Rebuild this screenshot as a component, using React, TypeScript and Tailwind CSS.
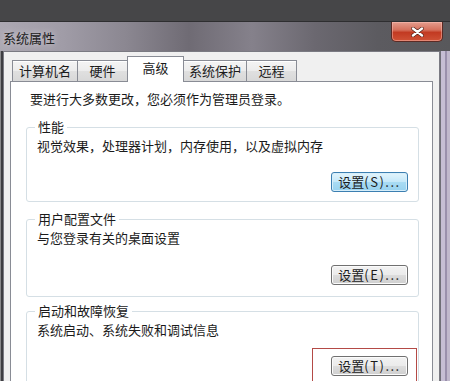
const tabs = [
  { label: "计算机名", w: "w-[66px]" },
  { label: "硬件", w: "w-[51px]" },
  { label: "高级", w: "w-[57px]", active: true },
  { label: "系统保护", w: "w-[64px]" },
  { label: "远程", w: "w-[51px]" },
];

function SettingsButton({ keyName, hot }: { keyName: string; hot?: boolean }) {
  return (
    <button
      className={
        hot
          ? "flex h-[20px] w-[77px] items-center justify-center rounded-[3px] border border-[#3c7fb1] bg-[linear-gradient(to_bottom,#e3f4fc_0%,#c4e8f9_50%,#a9dcf4_50%,#98d2ef_100%)] text-[13px] leading-[16px] shadow-[inset_0_0_0_1px_#d6eefa]"
          : "flex h-[20px] w-[77px] items-center justify-center rounded-[3px] border border-[#707070] bg-[linear-gradient(to_bottom,#f2f2f2_0%,#ebebeb_50%,#dddddd_50%,#cfcfcf_100%)] text-[13px] leading-[16px] shadow-[inset_0_0_0_1px_#fbfbfb]"
      }
    >
      设置<span className="tracking-[1.5px]">({keyName})...</span>
    </button>
  );
}

function GroupBox({
  title,
  desc,
  height,
  top,
  children,
}: {
  title: string;
  desc: string;
  height: string;
  top: string;
  children: React.ReactNode;
}) {
  return (
    <div className={`${top} ${height} ml-[15px] mr-[13px] flex flex-col rounded-[3px] border border-[#d5dfe5]`}>
      <span className="-mt-[9px] ml-[8px] self-start bg-white px-[3px] leading-[16px]">{title}</span>
      <p className="mt-[3px] pl-[10px]">{desc}</p>
      {children}
    </div>
  );
}

export default function App() {
  return (
    <div className="flex h-[381px] w-[450px] flex-col overflow-hidden bg-[#444446] font-['Noto_Sans_CJK_SC',sans-serif] text-[13px] leading-[16px] text-[#1b1b1b]">
      <div className="h-[22px] shrink-0 border-b border-[#2e2e30] bg-[#464648]" />

      <div className="flex flex-1 flex-col bg-[linear-gradient(to_right,#aca8b2_0%,#a09ca7_14%,#8b8791_28%,#6f6b74_42%,#85818b_56%,#6b6870_70%,#5c5b60_84%,#58585b_100%)]">
        {/* title bar */}
        <div className="flex h-[29px] shrink-0 items-start justify-between">
          <span className="pl-[3px] pt-[8px] text-[#202020] [text-shadow:0_0_6px_#d8d4dc]">系统属性</span>
          <button className="mr-[7px] flex h-[20px] w-[52px] items-center justify-center rounded-b-[5px] border border-t-0 border-[#5b2a24] bg-[linear-gradient(to_bottom,#e59d8e_0%,#d5705c_42%,#c23a22_55%,#cf5236_100%)] shadow-[inset_0_0_0_1px_rgba(255,200,190,0.45)]">
            <svg width="13" height="10" viewBox="0 0 13 10">
              <path d="M2 1.5 L11 8.5 M11 1.5 L2 8.5" stroke="#4a1a12" strokeWidth="3.6" strokeLinecap="round" />
              <path d="M2 1.5 L11 8.5 M11 1.5 L2 8.5" stroke="#ffffff" strokeWidth="2.4" strokeLinecap="round" />
            </svg>
          </button>
        </div>

        <div className="flex flex-1">
          <div className="w-[3px] bg-[linear-gradient(to_right,#8a8a8c_0px,#8a8a8c_1px,#3e3e42_1px,#3e3e42_3px)]" />

          {/* dialog body */}
          <div className="flex flex-1 flex-col border-x border-t border-[#7a7a82] bg-[#f0f0f0] pl-[6px] pr-[6px] pt-[4px]">
            <div className="flex h-[25px] items-end pl-[2px]">
              {tabs.map((t, i) =>
                t.active ? (
                  <div
                    key={t.label}
                    className={`${t.w} relative z-10 -mb-px -ml-px flex h-[26px] items-center justify-center border border-b-0 border-[#898c95] bg-white pb-[3px]`}
                  >
                    {t.label}
                  </div>
                ) : (
                  <div
                    key={t.label}
                    className={`${t.w} ${i === 0 ? "" : "-ml-px"} flex h-[21px] items-center justify-center border border-b-0 border-[#898c95] bg-[linear-gradient(to_bottom,#f4f4f4_0%,#ececec_50%,#e0e0e0_50%,#d8d8d8_100%)] shadow-[inset_0_1px_0_#ffffff]`}
                  >
                    {t.label}
                  </div>
                ),
              )}
            </div>

            {/* tab panel */}
            <div className="flex-1 border border-[#898c95] bg-white pt-[9px]">
              <p className="pl-[19px]">要进行大多数更改，您必须作为管理员登录。</p>

              <GroupBox title="性能" desc="视觉效果，处理器计划，内存使用，以及虚拟内存" top="mt-[20px]" height="h-[75px]">
                <div className="mt-[18px] flex justify-end pr-[10px]">
                  <SettingsButton keyName="S" hot />
                </div>
              </GroupBox>

              <GroupBox title="用户配置文件" desc="与您登录有关的桌面设置" top="mt-[17px]" height="h-[78px]">
                <div className="mt-[19px] flex justify-end pr-[10px]">
                  <SettingsButton keyName="E" />
                </div>
              </GroupBox>

              <GroupBox title="启动和故障恢复" desc="系统启动、系统失败和调试信息" top="mt-[14px]" height="h-[80px]">
                <div className="mt-[10px] flex justify-end pr-[1px]">
                  <div className="border border-[#b44a46] pb-[8px] pl-[18px] pr-[8px] pt-[7px]">
                    <SettingsButton keyName="T" />
                  </div>
                </div>
              </GroupBox>
            </div>
          </div>

          <div className="w-[10px] bg-[linear-gradient(to_right,#6e6e76_0px,#6e6e76_1px,#c6bed4_1px,#c6bed4_5px,#9a90ac_5px,#9a90ac_7px,#c0b8cc_7px,#c0b8cc_10px)]" />
        </div>
      </div>
    </div>
  );
}
